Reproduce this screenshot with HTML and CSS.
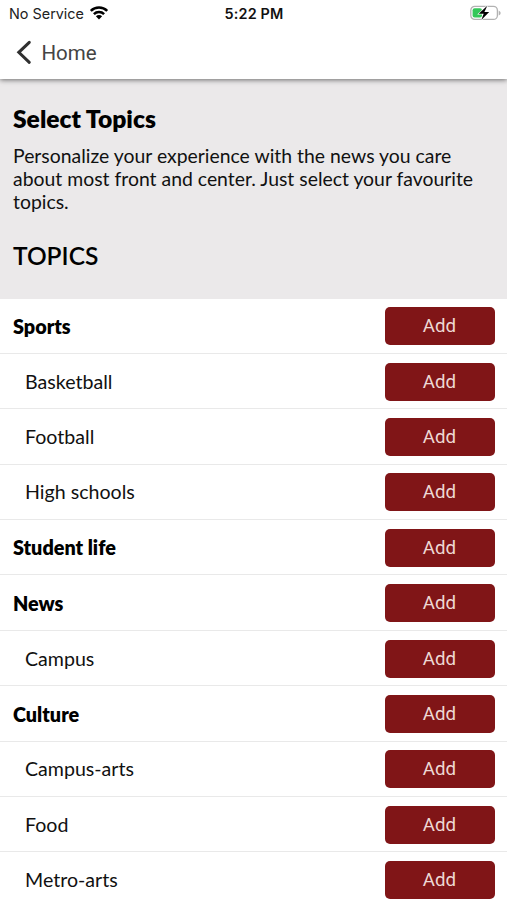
FILE: index.html
```html
<!DOCTYPE html>
<html lang="en">
<head>
<meta charset="utf-8">
<title>Select Topics</title>
<link rel="stylesheet" href="styles.css">
</head>
<body>
<header class="top">
  <div class="status">
    <div class="carrier"><span>No Service</span>
      <svg class="wifi" width="20" height="16" viewBox="0 0 20 16"><g fill="none" stroke="#000" stroke-width="2.5"><path d="M1.8 5.9a11.6 11.6 0 0 1 16.4 0"/><path d="M4.9 9.1a7.2 7.2 0 0 1 10.2 0"/></g><path d="M6.9 11.2a4.4 4.4 0 0 1 6.2 0L10 14.4z"/></svg>
    </div>
    <div class="time">5:22 PM</div>
    <svg class="battery" width="31" height="16" viewBox="0 0 31 16"><rect x=".8" y="1.4" width="26.6" height="13" rx="4" fill="#fff" stroke="#b2b2b2" stroke-width="1.3"/><rect x="2.6" y="3.2" width="9.4" height="9.4" rx="2" fill="#34c759"/><path d="M28.7 5.4q2 1 2 2.5t-2 2.5z" fill="#b2b2b2"/><path d="M17.3.8 8.7 8.8h5l-2.4 6.3 7.9-8.1h-4.8z" stroke="#fff" stroke-width="1.2" paint-order="stroke"/></svg>
  </div>
  <nav class="nav">
    <svg width="16" height="25" viewBox="0 0 16 25" fill="none" stroke="#303030" stroke-width="3" stroke-linecap="round"><path d="M13.3 2.3 2.8 12.3l10.5 10"/></svg>
    <a class="back">Home</a>
  </nav>
</header>
<section class="intro">
  <h1>Select Topics</h1>
  <p>Personalize your experience with the news you care about most front and center. Just select your favourite topics.</p>
  <h2>TOPICS</h2>
</section>
<ul class="topics">
  <li class="group"><span>Sports</span><button>Add</button></li>
  <li><span>Basketball</span><button>Add</button></li>
  <li><span>Football</span><button>Add</button></li>
  <li><span>High schools</span><button>Add</button></li>
  <li class="group"><span>Student life</span><button>Add</button></li>
  <li class="group"><span>News</span><button>Add</button></li>
  <li><span>Campus</span><button>Add</button></li>
  <li class="group"><span>Culture</span><button>Add</button></li>
  <li><span>Campus-arts</span><button>Add</button></li>
  <li><span>Food</span><button>Add</button></li>
  <li><span>Metro-arts</span><button>Add</button></li>
</ul>
</body>
</html>
```
FILE: styles.css
```css
* { box-sizing: border-box; }
html { height: 900px; overflow: hidden; }
body {
  margin: 0;
  height: 900px;
  overflow: hidden;
  background: #fff;
  color: #111;
  font-family: Lato, sans-serif;
}
.top {
  position: relative;
  height: 79px;
  background: #fff;
  box-shadow: 0 1px 5px rgba(0, 0, 0, .55);
}
.status {
  display: grid;
  grid-template-columns: 1fr auto 1fr;
  align-items: center;
  height: 27px;
  padding: 0 6px 0 9px;
  font: 14.4px/27px Inter, sans-serif;
  color: #222;
}
.carrier { display: flex; align-items: center; gap: 5px; white-space: nowrap; }
.wifi { margin-top: -1px; }
.time { margin-left: -2px; font-weight: 600; color: #111; letter-spacing: .2px; }
.battery { justify-self: end; margin-top: -1px; }
.nav {
  display: flex;
  align-items: center;
  gap: 9.5px;
  height: 51px;
  padding-left: 16px;
}
.back { font: 20.5px/26px Roboto, sans-serif; color: #444; }
.intro { height: 219.5px; padding: 26px 13px 0; background: #ebe9ea; }
h1 { margin: 0; font-size: 24.6px; line-height: 28px; font-weight: 800; color: #000; }
p { margin: 10.6px 0 0; font-size: 19.4px; line-height: 23.3px; }
h2 { margin: 27.4px 0 0; font-size: 24.5px; line-height: 30px; font-weight: 600; color: #000; }
.topics { margin: 0; padding: 0; list-style: none; }
.topics li {
  display: flex;
  align-items: center;
  justify-content: space-between;
  height: 55.4px;
  padding: 1.2px 12.5px 0 25px;
  border-bottom: 1px solid #e9e9e9;
  font-size: 19.6px;
}
.topics span { margin-top: -1px; }
.topics .group { padding-left: 13px; font-size: 19.8px; font-weight: 800; color: #000; }
button {
  width: 110px;
  height: 38px;
  padding: 0;
  border: 0;
  border-radius: 5px;
  background: #801517;
  color: #eed8d4;
  font: 18.7px/38px Roboto, sans-serif;
}
```
